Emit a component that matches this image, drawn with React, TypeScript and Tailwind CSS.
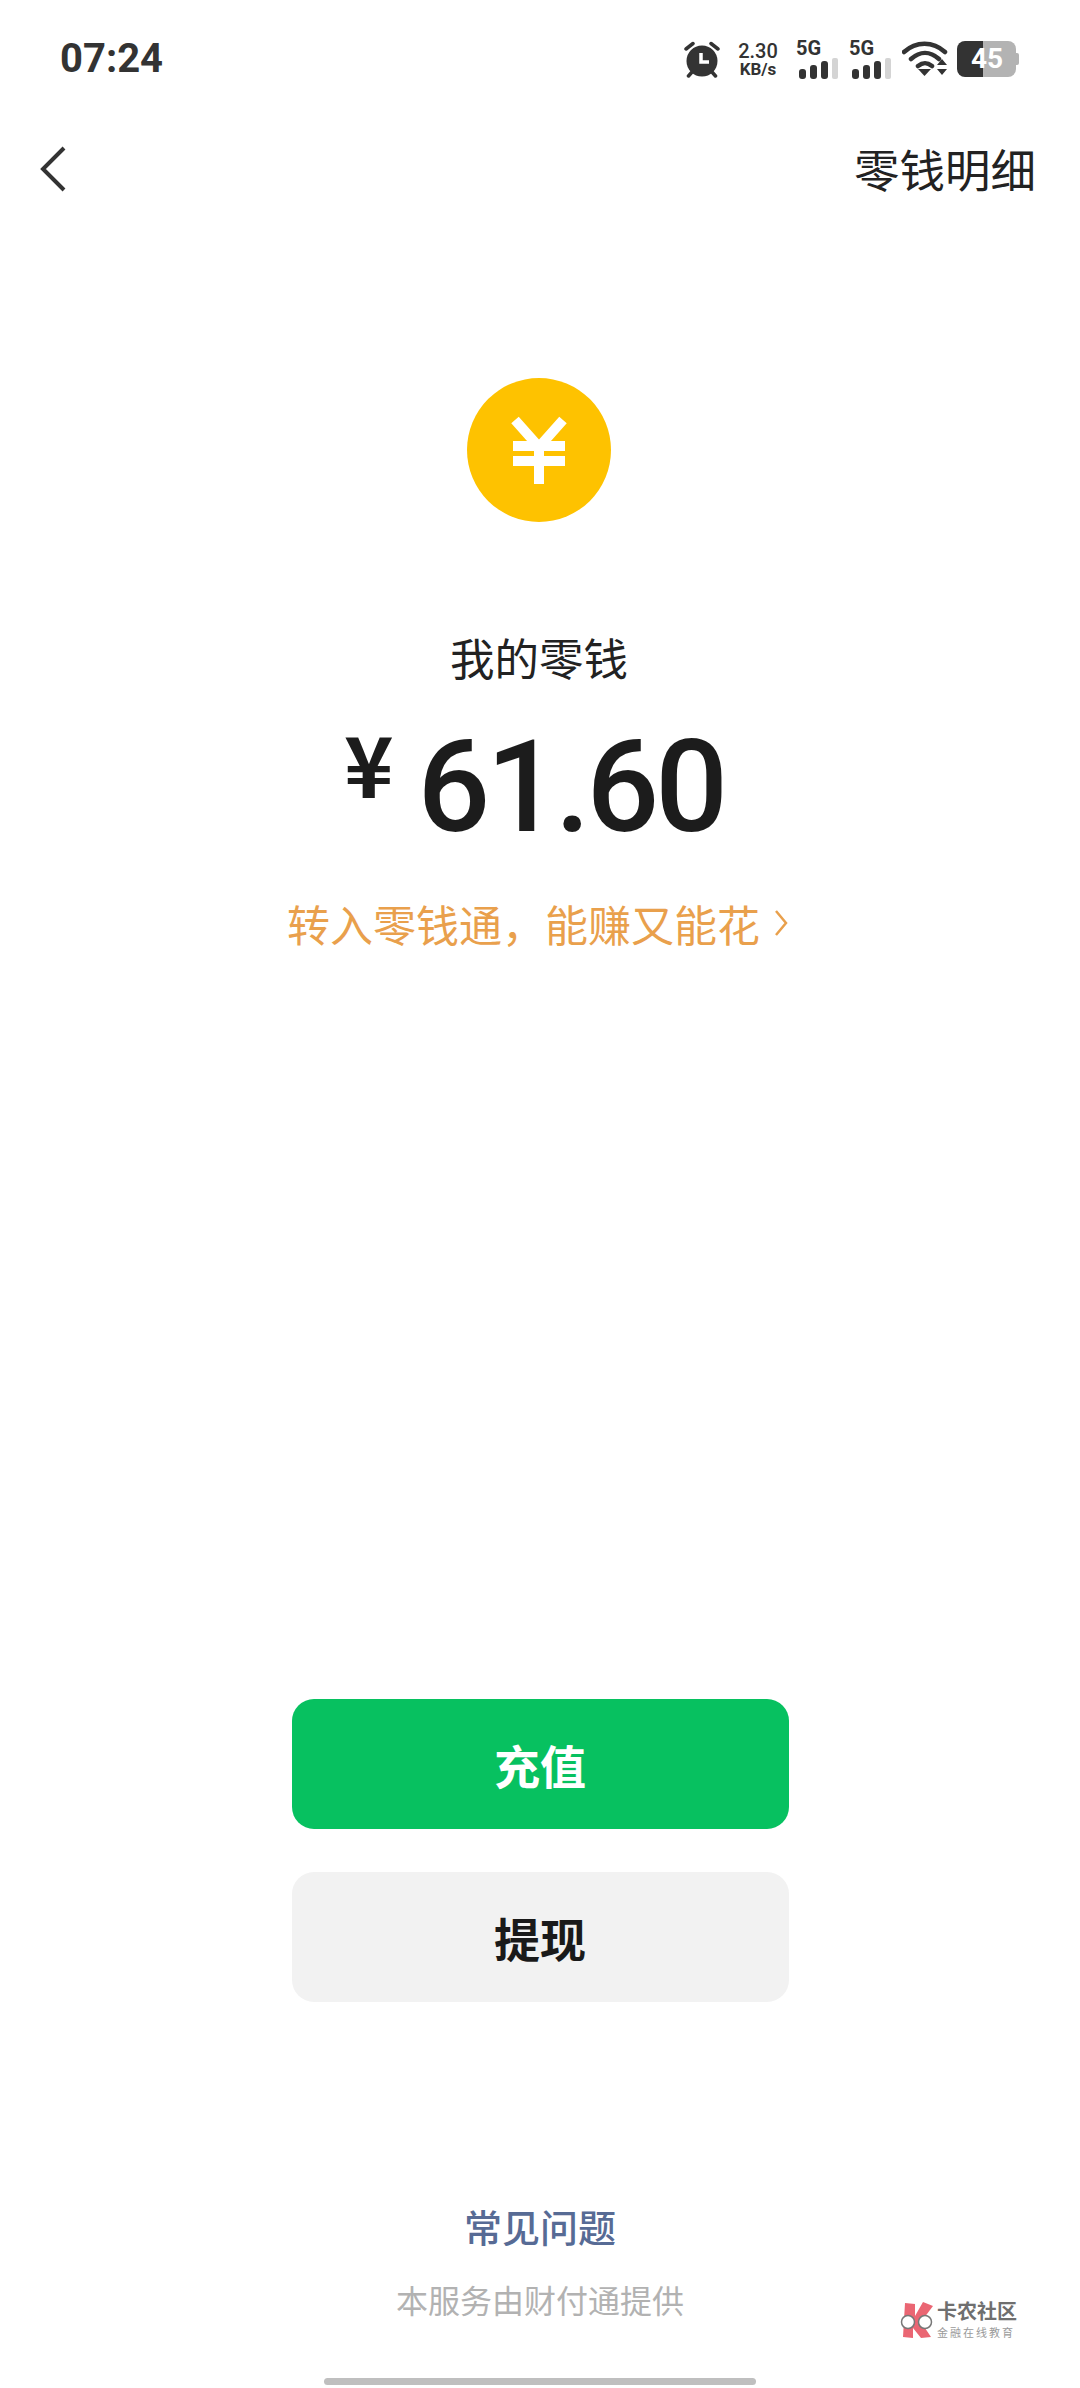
const CJK = "font-['Noto_Sans_CJK_SC','Noto_Sans',sans-serif]";

function SignalIcon() {
  return (
    <div className="flex flex-col items-start w-[43px]">
      <span className="font-['Roboto',sans-serif] font-bold text-[20px] leading-[16px] text-[#333333]">5G</span>
      <svg width="43" height="21" viewBox="0 0 43 21" className="mt-[2px]">
        <rect x="3" y="11" width="7" height="10" rx="3" fill="#333333" />
        <rect x="14" y="7" width="7" height="14" rx="3" fill="#333333" />
        <rect x="25" y="3" width="7" height="18" rx="3" fill="#333333" />
        <rect x="36" y="0" width="6" height="21" rx="2" fill="#d4d4d4" />
      </svg>
    </div>
  );
}

function StatusBar() {
  return (
    <div className="flex h-[76px] items-center justify-between pl-[60px] pr-[60px] pt-[21px] box-content -mb-[1px]">
      <span className="font-['Roboto',sans-serif] font-bold text-[40px] leading-none text-[#333333]">07:24</span>
      <div className="flex items-center">
        {/* alarm */}
        <svg width="38" height="37" viewBox="0 0 38 37">
          <circle cx="19" cy="20" r="15.500" fill="#333333" />
          <path d="M3 8l7-5.500M35 8l-7-5.500M9 31l-3.500 4M29 31l3.500 4" stroke="#333333" strokeWidth="3.500" strokeLinecap="round" fill="none" />
          <path d="M18 12v9h8" stroke="#ffffff" strokeWidth="3.500" fill="none" />
        </svg>
        <div className="ml-[16px] flex w-[42px] flex-col items-center font-['Roboto',sans-serif] text-[#333333]">
          <span className="text-[20px] leading-[20px] font-medium">2.30</span>
          <span className="text-[17px] leading-[16px] font-bold">KB/s</span>
        </div>
        <div className="ml-[17px]"><SignalIcon /></div>
        <div className="ml-[10px]"><SignalIcon /></div>
        {/* wifi */}
        <svg width="48" height="36" viewBox="0 0 48 36" className="ml-[10px]">
          <path d="M2 11C14 0 31 0 43 11M9 18C18 10 28 10 37 18M16 25c5-4 9-4 14 0" stroke="#333333" strokeWidth="4.500" fill="none" strokeLinecap="round" />
          <path d="M16 28h13l-6.500 7z" fill="#333333" />
          <path d="M35 24l5-6 5 6zM35 28h10l-5 6z" fill="#333333" />
        </svg>
        {/* battery */}
        <div className="relative ml-[7px] flex h-[36px] w-[63px] items-center">
          <div className="h-full w-[26px] rounded-l-[8px] bg-[#333333]" />
          <div className="h-full w-[33px] rounded-r-[8px] bg-[#b3b3b3]" />
          <div className="h-[12px] w-[3px] rounded-r-[2px] bg-[#b3b3b3]" />
          <span className="absolute left-[14px] top-[5px] font-['Roboto',sans-serif] text-[28px] leading-[26px] font-bold text-white">45</span>
        </div>
      </div>
    </div>
  );
}

function NavBar() {
  return (
    <div className="flex h-[76px] items-center justify-between pl-[40px] pr-[44px] mt-[35px]">
      <svg width="26" height="46" viewBox="0 0 26 46">
        <path d="M24 2L3 23l21 21" stroke="#333333" strokeWidth="4" fill="none" />
      </svg>
      <span className={`${CJK} text-[45.500px] leading-none text-[#222222]`}>零钱明细</span>
    </div>
  );
}

function CoinIcon() {
  return (
    <svg width="144" height="144" viewBox="0 0 144 144" className="mr-[2px]">
      <circle cx="72" cy="72" r="72" fill="#fec200" />
      <path d="M48 42l24 27 24-27M46 68h52M46 83h52M72 68v38" stroke="#ffffff" strokeWidth="10" fill="none" />
    </svg>
  );
}

function Watermark() {
  return (
    <div className="absolute left-[899px] top-[2299px] flex items-center">
      <svg width="38" height="38" viewBox="0 0 38 38">
        <path d="M6 2l10 1v12l8-14 10 4-12 16 10 15-10 1-8-10v10l-10-1z" fill="#ea6673" />
        <circle cx="9" cy="21" r="6.500" fill="#ffffff" stroke="#777777" strokeWidth="1.500" />
        <circle cx="26" cy="21" r="6.500" fill="#ffffff" stroke="#777777" strokeWidth="1.500" />
      </svg>
      <div className={`${CJK} flex flex-col gap-[1px] text-[#6f6f6f]`}>
        <span className="text-[20px] leading-[24px] font-bold">卡农社区</span>
        <span className="text-[11px] leading-[16px] tracking-[2px] text-[#9a9a9a]">金融在线教育</span>
      </div>
    </div>
  );
}

export default function App() {
  return (
    <div className={`relative flex h-[2388px] w-[1080px] flex-col overflow-hidden bg-white ${CJK}`}>
      <StatusBar />
      <NavBar />

      <div className="mt-[171px] flex flex-col items-center">
        <CoinIcon />
        <div className="mt-[105px] pr-[2px] text-[44.500px] leading-[60px] text-[#222222]">我的零钱</div>
        <div className="mt-[40px] flex h-[120px] items-start pr-[12px]">
          <span className="mt-[-10px] text-[84px] leading-[90px] font-bold text-[#1c1c1c]">¥</span>
          <span className="ml-[24px] font-['Roboto',sans-serif] text-[128px] leading-[120px] font-medium tracking-[-4px] text-[#1c1c1c]">61.60</span>
        </div>
        <div className="mt-[46px] flex items-center pr-[5px]">
          <span className="text-[43px] leading-[60px] text-[#e9a04c]">转入零钱通，能赚又能花</span>
          <svg width="14" height="28" viewBox="0 0 14 28" className="ml-[14px]">
            <path d="M2 2l10 12L2 26" stroke="#e9a04c" strokeWidth="2.500" fill="none" />
          </svg>
        </div>
      </div>

      <div className="mt-[746px] flex flex-col items-center gap-[43px]">
        <button className="h-[130px] w-[497px] rounded-[22px] bg-[#07c160] text-[46px] font-bold text-white">充值</button>
        <button className="h-[130px] w-[497px] rounded-[22px] bg-[#f2f2f2] text-[46px] font-bold text-[#1a1a1a]">提现</button>
      </div>

      <div className="mt-[196px] flex flex-col items-center">
        <span className="text-[38px] leading-[56px] font-medium text-[#576b95]">常见问题</span>
        <span className="mt-[17px] text-[32px] leading-[56px] text-[#b2b2b2]">本服务由财付通提供</span>
      </div>

      <div className="mt-auto mb-[3px] h-[7px] w-[432px] self-center rounded-full bg-[#bfbfbf]" />

      <Watermark />
    </div>
  );
}
